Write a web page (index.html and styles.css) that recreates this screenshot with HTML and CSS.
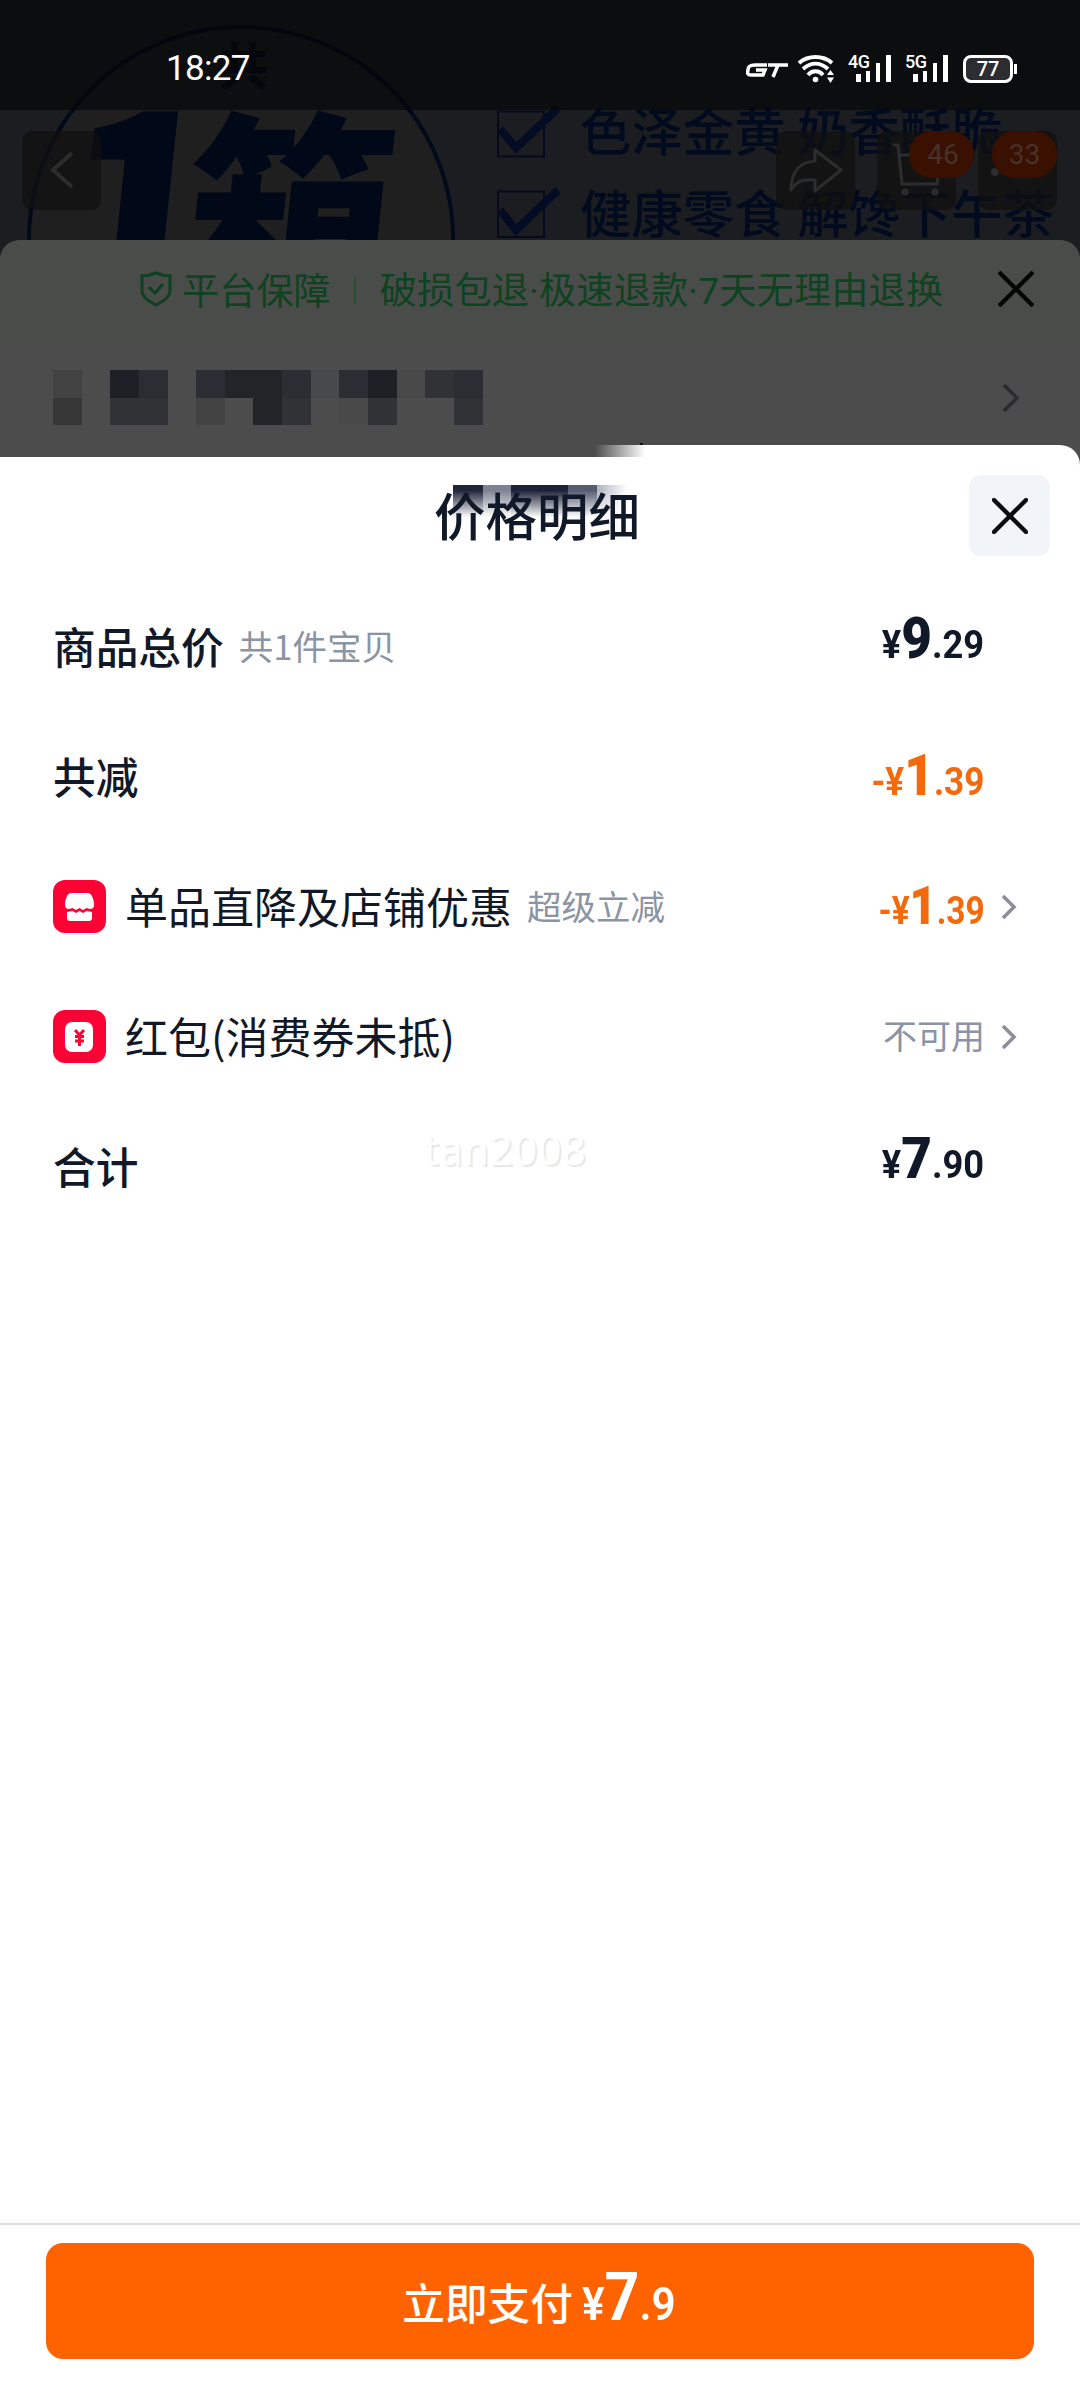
FILE: index.html
```html
<!DOCTYPE html>
<html lang="zh-CN">
<head>
<meta charset="utf-8">
<title>价格明细</title>
<link rel="stylesheet" href="styles.css">
</head>
<body>
<div class="phone">
  <div class="hero">
    <div class="seal"></div>
    <span class="seal-top">共</span>
    <span class="seal-one">1</span>
    <span class="seal-box">箱</span>
    <svg class="checks" width="70" height="130" viewBox="0 0 70 130" fill="none">
      <path d="M4 1.500H50V46.500H4ZM4 81.500H50V127H4Z" stroke="#030a1c" stroke-width="2"/>
      <path d="M6 19L22 38L64 -2M6 100L22 120L64 80" stroke="#030c22" stroke-width="8"/>
    </svg>
    <div class="claims"><p>色泽金黄 奶香酥脆</p><p>健康零食 解馋下午茶</p></div>
    <div class="navbar">
      <span class="nav-btn"><svg width="79" height="79" fill="none" stroke="#2c2c2c" stroke-width="4"><path d="M50 22L31 39L50 56"/></svg></span>
      <span class="nav-btn nav-push"><svg width="79" height="79" fill="none" stroke="#2c2d2f" stroke-width="3" stroke-linejoin="round"><path d="M39 19L65 39L39 60V49C25 48 20 51 15 59C15 43 22 31 39 30Z"/></svg></span>
      <span class="nav-btn"><svg width="79" height="79" fill="none" stroke="#2c2d2f" stroke-width="3"><path d="M16 14H21L25 53H60L64 24H23"/><circle cx="28" cy="61" r="2"/><circle cx="58" cy="61" r="2"/></svg><b class="badge">46</b></span>
      <span class="nav-btn"><svg width="79" height="79" fill="#2c2d2f"><circle cx="17" cy="41" r="4"/><circle cx="39" cy="43" r="4"/></svg><b class="badge badge-end">33</b></span>
    </div>
  </div>

  <div class="statusbar">
    <span class="time">18:27</span>
    <div class="status-icons">
      <svg class="gt" width="42" height="16" viewBox="0 0 42 16" fill="none" stroke="#fff" stroke-width="3.500"><path d="M21 3H9C3 3 2 5 2 8C1 12 2 13 5 13H17L19 8H10M22 3H42M32 3L27 15"/></svg>
      <svg class="wifi" width="38" height="28" viewBox="0 0 38 28" fill="none" stroke="#fff" stroke-width="3.800"><path d="M1 8C10 0 25 0 34 8M5 14C13 7 22 7 30 14M10 20C14 15 21 15 25 20"/><circle cx="17.500" cy="24.500" r="2.800" fill="#fff" stroke="none"/><path d="M29 20L32.500 15L36 20ZM29 22.500L32.500 28L36 22.500Z" fill="#fff" stroke="none"/></svg>
      <div class="signal"><i>4G</i><svg width="44" height="28" fill="#fff"><path d="M8 19h5v8h-5zM18 16h4v11h-4zM28 8h4v19h-4zM38 0h5v27h-5z"/></svg></div>
      <div class="signal"><i>5G</i><svg width="44" height="28" fill="#fff"><path d="M8 19h5v8h-5zM18 16h4v11h-4zM28 8h4v19h-4zM38 0h5v27h-5z"/></svg></div>
      <div class="battery">77</div>
    </div>
  </div>

  <section class="order-sheet">
    <div class="guarantee">
      <svg width="32" height="36" viewBox="0 0 32 36" fill="none" stroke="#0f4023" stroke-width="3"><path d="M16 2C11 4 6 5 2 5V19C2 26 8 30 16 34C24 30 30 26 30 19V5C26 5 21 4 16 2Z"/><path d="M9 16L15 22L23 13"/></svg>
      <span class="g-title">平台保障</span><i class="g-line"></i><span class="g-text">破损包退·极速退款·7天无理由退换</span>
      <svg class="g-close" width="36" height="36" stroke="#050505" stroke-width="4.200"><path d="M1 1L35 35M35 1L1 35"/></svg>
    </div>
    <div class="address">
      <div class="mosaic">
        <i class="m3"></i><i></i><i class="m9"></i><i class="m7"></i><i></i><i class="m7"></i><i class="m8"></i><i class="m8"></i><i class="m7"></i><i class="m1"></i><i class="m7"></i><i class="m9"></i><i class="m2"></i><i class="m6"></i><i class="m7"></i>
        <i class="m5"></i><i></i><i class="m6"></i><i class="m6"></i><i></i><i class="m3"></i><i></i><i class="m8"></i><i class="m6"></i><i></i><i class="m2"></i><i class="m6"></i><i></i><i></i><i class="m6"></i>
      </div>
      <svg width="18" height="30" fill="none" stroke="#2b2c30" stroke-width="3.500"><path d="M2 2L15 15L2 28"/></svg>
    </div>
  </section>

  <section class="price-sheet">
    <div class="edge-fade"></div>
    <header class="sheet-head">
      <div class="smudge"></div>
      <h1>价格明细</h1>
      <button class="close"><svg width="36" height="36" stroke="#0b0b0f" stroke-width="4.400" stroke-linecap="round"><path d="M2 2L34 34M34 2L2 34"/></svg></button>
    </header>
    <div class="rows">
      <div class="row row-total"><span class="label strong">商品总价</span><small>共1件宝贝</small><span class="price">¥<b>9</b>.29</span></div>
      <div class="row"><span class="label strong">共减</span><span class="price orange">-¥<b>1</b>.39</span></div>
      <div class="row">
        <svg class="tag" width="53" height="53"><rect width="53" height="53" rx="12" fill="#fb0334"/><path d="M18 13H35C39 13 41 20 41 25Q41 29 37 29L33.500 28L30 30L26.500 28L23 30L19.500 28L16 29Q12 29 12 25C12 20 14 13 18 13Z" fill="#fff"/><path d="M14 32L19.500 31L23 33L26.500 31L30 33L33.500 31L39 32V38Q39 41 36 41H17Q14 41 14 38Z" fill="#fff"/></svg>
        <span class="label">单品直降及店铺优惠</span><small>超级立减</small><span class="price orange mini">-¥<b>1</b>.39</span>
        <svg class="chev" width="16" height="28"><path d="M2 3L13 14L2 25"/></svg>
      </div>
      <div class="row">
        <svg class="tag" width="53" height="53"><rect width="53" height="53" rx="12" fill="#fb0334"/><rect x="12" y="12" width="28" height="30" rx="7" fill="#fff"/><path d="M22 20L26.500 25L31 20M26.500 25V36M22 26.500H31M22 31H31" fill="none" stroke="#fb0334" stroke-width="3"/></svg>
        <span class="label">红包(消费券未抵)</span><span class="none">不可用</span>
        <svg class="chev" width="16" height="28"><path d="M2 3L13 14L2 25"/></svg>
      </div>
      <div class="row row-sum"><span class="label strong">合计</span><span class="price">¥<b>7</b>.90</span></div>
    </div>
    <span class="watermark">tan2008</span>
    <footer class="paybar"><button class="pay"><span>立即支付</span><span class="pay-price">¥<b>7</b>.9</span></button></footer>
  </section>
</div>
</body>
</html>
```
FILE: styles.css
```css
* { box-sizing: border-box; }
body { margin: 0; font-family: "Noto Sans CJK SC", sans-serif; }
svg { display: block; flex: none; }
button { border: 0; padding: 0; font: inherit; }
p, h1 { margin: 0; }
.phone { position: relative; width: 1080px; height: 2400px; overflow: hidden; display: flex; flex-direction: column; background: #1c1e22; }

/* dimmed product picture with the artwork on it */
.hero { position: relative; height: 240px; flex: none; overflow: hidden; background: #1b1d21; }
.seal { position: absolute; left: 27px; top: 25px; width: 428px; height: 428px; border: 4px solid #020a1a; border-radius: 50%; background: #1f1f1f; }
.seal-top { position: absolute; left: 218px; top: 26px; font-size: 51px; line-height: 74px; font-weight: 700; color: #040a18; }
.seal-one, .seal-box { position: absolute; font-weight: 900; color: #010817; transform-origin: 0 100%; transform: skewX(-6deg); }
.seal-one { left: 52px; top: 66px; font-size: 248px; line-height: 248px; -webkit-text-stroke: 4px #010817; }
.seal-box { left: 174px; top: 90px; font-size: 210px; line-height: 220px; }
.checks { position: absolute; left: 494px; top: 110px; overflow: visible; }
.claims { position: absolute; left: 580px; top: 88px; font-size: 51.400px; line-height: 82px; font-weight: 500; color: #020a1e; white-space: pre; }
.navbar { position: absolute; left: 22px; right: 23px; top: 131px; display: flex; gap: 22px; }
.nav-btn { position: relative; width: 79px; height: 79px; border-radius: 10px; background: rgba(16, 16, 16, .7); }
.nav-push { margin-left: auto; }
.badge { position: absolute; left: 32px; top: 0; width: 65px; height: 47px; padding-left: 3px; border-radius: 23px; background: #3a1000; color: #453229; font: 400 28px/48px Roboto, sans-serif; text-align: center; }
.badge-end { left: 14px; padding: 0; }

.statusbar { position: absolute; left: 0; top: 0; width: 1080px; height: 110px; padding: 55px 63px 0 166px; display: flex; justify-content: space-between; background: rgba(5, 6, 8, .68); color: #fff; }
.time { font: 400 35px/28px Roboto, sans-serif; letter-spacing: -.7px; }
.status-icons { display: flex; height: 28px; }
.gt { margin: 7px 10px 0 0; }
.wifi { margin-right: 12px; }
.signal { position: relative; width: 44px; margin-right: 13px; }
.signal i { position: absolute; left: 0; top: 0; font: 500 18px/14px Roboto, sans-serif; letter-spacing: -.5px; }
.signal + .battery { margin-left: 1px; }
.battery { position: relative; width: 50px; height: 28px; margin-right: 4px; border: 3px solid #fff; border-radius: 8px; background: #2c2d30; font: 500 20px/22px Roboto, sans-serif; text-align: center; }
.battery::after { content: ""; position: absolute; right: -7px; top: 6px; width: 3px; height: 10px; background: #fff; }

/* dimmed order sheet */
.order-sheet { height: 205px; flex: none; background: #4c4c4c; border-radius: 20px 20px 0 0; overflow: hidden; }
.guarantee { height: 101px; padding: 0 46px 4px 140px; display: flex; align-items: center; background: #4a4c4a; color: #0f4221; font-size: 37.200px; line-height: 54px; white-space: nowrap; }
.g-title { margin-left: 10px; }
.g-line { width: 2px; height: 27px; margin: 4px 24px 0 23px; background: #24502f; }
.g-text { margin-top: 4px; font-family: Roboto, "Noto Sans CJK SC", sans-serif; letter-spacing: .15px; }
.g-close { margin-left: auto; }
.address { height: 104px; padding: 29px 60px 0 53px; display: flex; justify-content: space-between; align-items: flex-start; }
.address > svg { margin-top: 13px; }
.mosaic { display: grid; grid-template-columns: repeat(15, 28.650px); grid-template-rows: 28px 29px; }
.m1 { background: #48494c; }
.m2 { background: #494949; }
.m3 { background: #424242; }
.m5 { background: #363636; }
.m6 { background: #303236; }
.m7 { background: #2b2d32; }
.m8 { background: #232428; }
.m9 { background: #1f2026; }

.price-sheet { position: relative; flex: 1; display: flex; flex-direction: column; background: #fff; border-radius: 0 20px 0 0; box-shadow: 20px -20px 0 #4c4c4c; }
.edge-fade { position: absolute; left: 0; top: 0; width: 645px; height: 12px; background: linear-gradient(90deg, #4c4c4c 595px, #fff 645px); }
.edge-fade::after { content: ""; position: absolute; left: 640px; top: -2px; width: 3px; height: 2px; background: #151515; }
.sheet-head { position: relative; height: 140px; flex: none; display: flex; justify-content: center; align-items: center; }
.sheet-head h1 { position: relative; font-size: 51.500px; line-height: 76px; font-weight: 500; color: #111827; margin: -2px 0 0 -6px; }
.smudge { position: absolute; left: 453px; top: 40px; width: 174px; height: 36px; background: linear-gradient(90deg, #20263a 30px, #7d8392 30px 58px, #1c2338 58px 115px, #555c70 115px 144px, #aeb3bf 144px, #fff 174px); -webkit-mask-image: linear-gradient(#000 15%, transparent 90%); mask-image: linear-gradient(#000 15%, transparent 90%); }
.close { position: absolute; right: 30px; top: 30px; width: 81px; height: 81px; border-radius: 12px; background: #f1f5f9; display: grid; place-items: center; }

.rows { padding: 0 63px 0 53px; }
.row { height: 130px; display: flex; align-items: center; color: #111827; white-space: nowrap; }
.row:first-child { margin-top: -4px; }
.label { margin-top: -3px; font-size: 43px; line-height: 62px; }
.strong { font-size: 42.700px; font-weight: 500; }
.tag { margin: 1px 19px 0 0; }
.row small { margin: -2px 0 0 15px; font-size: 34.500px; color: #8b94a4; }
.price { margin: 0 33px 0 auto; font: 700 39px/56px Roboto, sans-serif; transform: scaleX(.93); transform-origin: 100% 50%; }
.price b { font-size: 57px; }
.orange { margin-top: 5px; color: #f3690c; transform: scaleX(.9); }
.row-total .price, .row-sum .price { margin-bottom: 8px; }
.mini { margin-right: 16px; font-size: 38px; transform: scaleX(.88); }
.mini b { font-size: 53px; }
.none { margin: -3px 16px 0 auto; font-size: 34px; color: #8b94a4; }
.chev { margin-top: 1px; fill: none; stroke: #8d8d9b; stroke-width: 3.500; }
.watermark { position: absolute; left: 424px; top: 678px; font: 400 41px/52px "Noto Sans", sans-serif; letter-spacing: .8px; color: #fff; text-shadow: 2px 2px 1px #e8e8e8; }

.paybar { height: 177px; margin-top: auto; padding: 18px 46px 0; border-top: 2px solid #ddd; }
.pay { width: 100%; height: 116px; padding-left: 6px; border-radius: 17px; background: #ff6300; color: #fff; display: flex; justify-content: center; align-items: center; font-size: 42.700px; font-weight: 500; }
.pay-price { margin-left: 9px; font: 600 46px/66px Roboto, sans-serif; transform: scaleX(.92); transform-origin: 0 50%; }
.pay-price b { font-size: 66px; font-weight: 700; }
```
